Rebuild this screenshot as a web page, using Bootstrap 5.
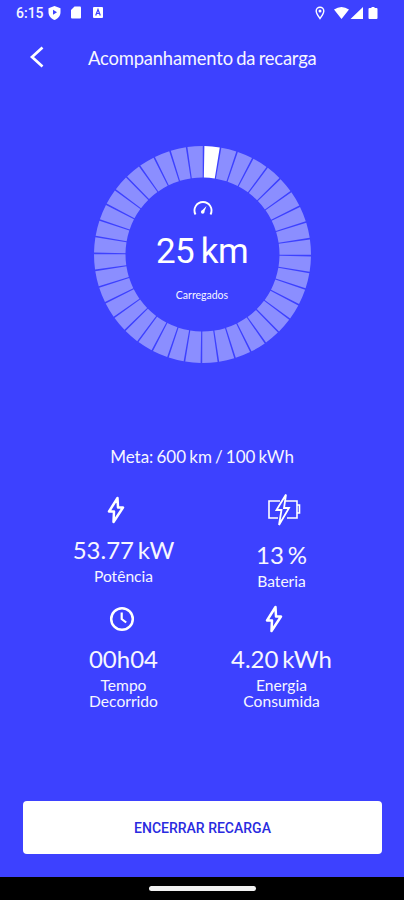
<!DOCTYPE html>
<html lang="pt-BR">
<head>
<meta charset="utf-8">
<meta name="viewport" content="width=device-width, initial-scale=1">
<title>Acompanhamento da recarga</title>
<link href="https://cdn.jsdelivr.net/npm/bootstrap@5.3.0/dist/css/bootstrap.min.css" rel="stylesheet">
<style>
body{font-family:Lato,sans-serif;background:#3d41ff;color:#f6f6ff}
.screen{height:900px;width:404px;line-height:1;white-space:nowrap}
svg{display:block;flex:none}
.status{height:25px;padding:0 25px 0 16px;font:500 14px/1 Roboto,sans-serif}
.topbar{height:64px;padding-left:29px}
.topbar h1{font-size:18.4px;letter-spacing:-.18px;word-spacing:-1.2px;margin:2px 0 0 43px;line-height:1}
.back{color:#fff;line-height:0}
.gauge{width:218px;height:218px;margin:57px 0 0 93px}
.gauge-text{inset:0}
.km{font:400 35px/40px Roboto,sans-serif;letter-spacing:-.6px;word-spacing:-1.5px;margin-top:16px;color:#fff}
.caption{font-size:10.5px;margin-top:18px}
.goal{font-size:17px;word-spacing:-1.2px;margin-top:84px}
.stats{margin:28px 45px 0 45px}
.stat{width:157px;height:110px}
.stat:nth-child(even){padding-left:2px}
.figure-icon{margin:3px 0 13px;padding-right:15px}
.clock-icon{margin-bottom:14px;padding-right:4px}
.battery-icon{margin:0 0 15px;padding:0 0 0 4px}
.stat:last-child .figure-icon{margin-top:2px}
.figure-value{font-size:24px;line-height:26px;word-spacing:-2.4px}
.figure-label{font-size:15.6px;line-height:16px;margin-top:5px;white-space:pre-line}
.stop{margin:0 22px 0 23px;height:53px;border-radius:4px;background:#fff;color:#2a2be0;font:500 14px/1 Roboto,sans-serif}
.homebar{height:23px;margin-top:23px;background:#000}
.pill{width:107px;height:5px;background:#f1f1f1}
</style>
</head>
<body>
<main class="screen d-flex flex-column overflow-hidden">
  <div class="status d-flex align-items-center">
    <span>6:15</span>
    <svg class="ms-1" width="13" height="14" viewBox="0 0 13 14"><path fill="#fff" d="M6.5 0 12.5 2.200V6c0 4-2.600 6.600-6 8C3.100 12.600.5 10 .5 6V2.200z"/><path fill="#3d41ff" d="m5 3.700 4 2.500-4 2.500z"/></svg>
    <svg width="12" height="13" viewBox="0 0 12 13" style="margin-left:9px"><path fill="#fff" d="M4.500.5H10q1 0 1 1v10q0 1-1 1H2q-1 0-1-1V4z"/></svg>
    <svg width="10" height="11" viewBox="0 0 10 11" style="margin-left:11px"><rect width="10" height="11" rx="1" fill="#fff"/><path d="m2.700 8.500 2.300-6 2.300 6M3.500 6.500h3" fill="none" stroke="#3d41ff" stroke-width="1.200"/></svg>
    <svg class="ms-auto" width="10" height="14" viewBox="0 0 10 14"><path fill="none" stroke="#fff" stroke-width="1.400" d="M5 12.500C3 9.700 1.200 7.500 1.200 5a3.800 3.800 0 0 1 7.600 0C8.800 7.500 7 9.700 5 12.500z"/><circle cx="5" cy="5" r="1.500" fill="#fff"/></svg>
    <svg width="46" height="14" viewBox="0 0 46 14" style="margin-left:8px"><path fill="#fff" d="M1 3.500Q8.500-1.500 16 3.500L8.500 13zM17.500 13 30 1v12zM36.500 2h2V1h3v1h2q1 0 1 1v9q0 1-1 1h-7q-1 0-1-1V3q0-1 1-1z"/></svg>
  </div>
  <header class="topbar d-flex align-items-center">
    <a class="back" href="#" aria-label="Voltar"><svg width="16" height="24" viewBox="0 0 16 24"><path d="M13.500 2.500 3 12l10.500 9.500" fill="none" stroke="#fff" stroke-width="2.700"/></svg></a>
    <h1 class="fw-normal">Acompanhamento da recarga</h1>
  </header>
  <section class="gauge position-relative flex-shrink-0">
    <svg width="218" height="218" viewBox="0 0 218 218">
      <g id="ticks" transform="translate(109.500 108.500)"></g>
    </svg>
    <div class="gauge-text position-absolute d-flex flex-column align-items-center">
      <svg width="22" height="16" viewBox="0 0 22 16" style="margin-top:54px;margin-left:1px"><path d="M3.500 14.500a8.500 8.500 0 1 1 15 0" fill="none" stroke="#fff" stroke-width="1.900"/><path d="m9.500 11 5-5-2.500 6.500z" fill="#fff"/><circle cx="10.700" cy="12" r="1.800" fill="#fff"/></svg>
      <div class="km">25 km</div>
      <div class="caption">Carregados</div>
    </div>
  </section>
  <p class="goal text-center mb-0">Meta: 600 km / 100 kWh</p>
  <section class="stats d-flex flex-wrap">
    <div class="stat d-flex flex-column align-items-center text-center">
      <div class="figure-icon"><svg width="18" height="28" viewBox="0 0 18 28"><path d="M10.500 2 2 15.500h5L6.500 26 16 11.500h-5z" fill="none" stroke="#fff" stroke-width="2.500" stroke-linejoin="round"/></svg></div>
      <div class="figure-value">53.77 kW</div><div class="figure-label">Potência</div>
    </div>
    <div class="stat d-flex flex-column align-items-center text-center">
      <div class="figure-icon battery-icon"><svg width="34" height="34" viewBox="0 0 34 34"><path d="M13 8H2v17h9M20 25h10V8H18M30 12h2.500v8H30" fill="none" stroke="#fff" stroke-width="1.600"/><path d="M19 1.500 9.500 17h5L12 32l10-17h-5z" fill="none" stroke="#fff" stroke-width="1.800"/></svg></div>
      <div class="figure-value">13 %</div><div class="figure-label">Bateria</div>
    </div>
    <div class="stat d-flex flex-column align-items-center text-center">
      <div class="figure-icon clock-icon"><svg width="26" height="26" viewBox="0 0 26 26"><circle cx="13" cy="13" r="10.800" fill="none" stroke="#fff" stroke-width="2.500"/><path d="M12.700 6.500V13l4.500 3.500" fill="none" stroke="#fff" stroke-width="2.200"/></svg></div>
      <div class="figure-value">00h04</div><div class="figure-label">Tempo
Decorrido</div>
    </div>
    <div class="stat d-flex flex-column align-items-center text-center">
      <div class="figure-icon"><svg width="18" height="28" viewBox="0 0 18 28"><path d="M10.500 2 2 15.500h5L6.500 26 16 11.500h-5z" fill="none" stroke="#fff" stroke-width="2.500" stroke-linejoin="round"/></svg></div>
      <div class="figure-value">4.20 kWh</div><div class="figure-label">Energia
Consumida</div>
    </div>
  </section>
  <button class="stop btn mt-auto flex-shrink-0">ENCERRAR RECARGA</button>
  <footer class="homebar d-flex align-items-center justify-content-center flex-shrink-0"><div class="pill rounded-pill"></div></footer>
</main>
<script src="https://cdn.jsdelivr.net/npm/bootstrap@5.3.0/dist/js/bootstrap.bundle.min.js"></script>
<script>
// Forty ring segments of nine degrees each; the first one is lit.
const ticks = document.getElementById('ticks');
const point = (r, deg) => {
  const a = (deg - 90) * Math.PI / 180;
  return (r * Math.cos(a)).toFixed(2) + ' ' + (r * Math.sin(a)).toFixed(2);
};
for (let i = 0; i < 40; i++) {
  const from = i * 9 + 1, to = from + 8.15;
  const p = document.createElementNS('http://www.w3.org/2000/svg', 'path');
  p.setAttribute('d', `M${point(77, from)}L${point(108.5, from)}A108.5 108.5 0 0 1 ${point(108.5, to)}L${point(77, to)}A77 77 0 0 0 ${point(77, from)}Z`);
  p.setAttribute('fill', i ? '#8b8eff' : '#fff');
  ticks.append(p);
}
</script>
</body>
</html>
